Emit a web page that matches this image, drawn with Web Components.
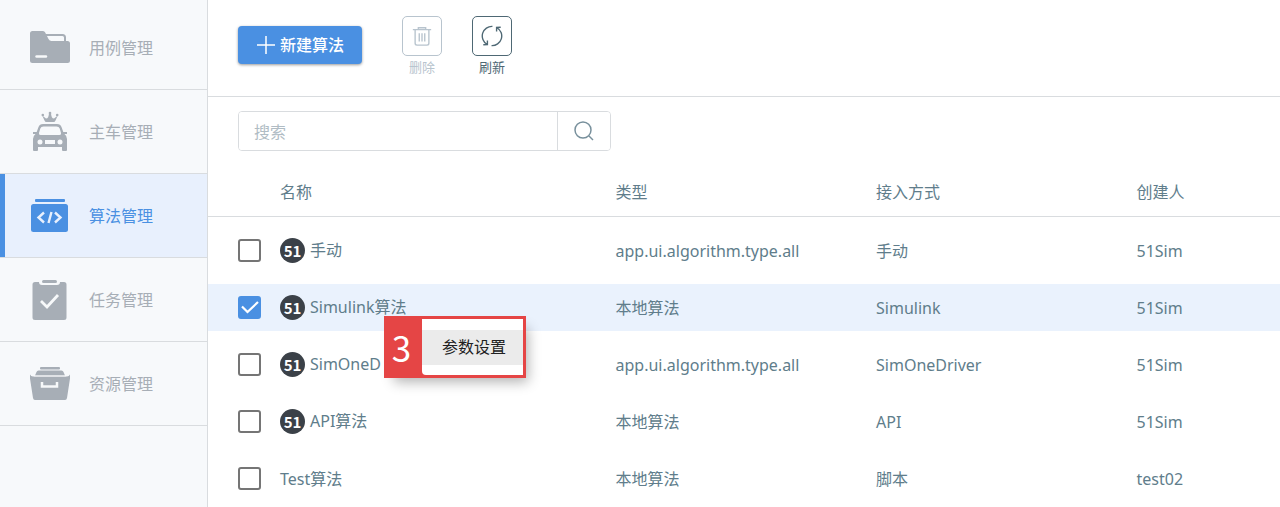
<!DOCTYPE html>
<html lang="zh-CN">
<head>
<meta charset="utf-8">
<meta name="viewport" content="width=device-width, initial-scale=1">
<title>算法管理</title>
<style>
  html, body { margin: 0; min-height: 100%; }
  body {
    font: 16px/24px "Noto Sans", "Noto Sans CJK SC", sans-serif;
    color: #607d8b;
    background: #fff;
    --blue: #4a90e2;
    --line: #d9dcdf;
  }
</style>
</head>
<body>
<algo-app></algo-app>
<script>
const define = (name, html, setup) => {
  const template = document.createElement('template');
  template.innerHTML = html;
  customElements.define(name, class extends HTMLElement {
    connectedCallback() {
      if (this.shadowRoot) return;
      const root = this.attachShadow({ mode: 'open' });
      root.append(template.content.cloneNode(true));
      if (setup) setup(this, root);
    }
  });
};

const navIcons = {
  folder: '<path fill="currentColor" d="M0 2.500Q0 0 2.500 0H13q1.500 0 2.200 1.500L18.500 8q1 2 3 2H37.500q2.500 0 2.500 2.500V29.500q0 2.500-2.500 2.500H2.500Q0 32 0 29.500z" transform="translate(1 4)"/><path fill="none" stroke="currentColor" stroke-width="2" d="M17 8h16.500q2.500 0 2.500 2.500V15"/><path stroke="#f7f9fa" stroke-width="2.400" stroke-linecap="round" d="M7.500 29.500h9.500"/>',
  car: '<g fill="currentColor"><path d="M13.200 4.500L17 7.500Q19.800 7.500 20 2h2Q22.200 7.500 25 7.500L28.800 4.500L26.500 9.500Q26 11 24.500 11H17.500Q16 11 15.500 9.500z"/><circle cx="13.800" cy="4" r="1.300"/><circle cx="21" cy="2" r="1.300"/><circle cx="28.200" cy="4" r="1.300"/><path fill-rule="evenodd" d="M14 13h14q3.500 0 4.500 3l1.800 5H38v2h-2.500q2.500 2 2.500 5v11q0 1-1 1h-3q-1 0-1-1v-3H9v3q0 1-1 1H5q-1 0-1-1V28q0-3 2.500-5H4v-2h3.700l1.800-5q1-3 4.500-3zm.5 2.500q-2.500 0-3.200 2L10 22q-.5 2 1.500 2h19q2 0 1.500-2l-1.300-4.500q-.7-2-3.200-2zM11 28.500a2.500 2.500 0 100 5 2.500 2.500 0 000-5zm5 .5v4h10v-4zm15-.5a2.500 2.500 0 100 5 2.500 2.500 0 000-5z"/></g>',
  code: '<rect x="6" y="4" width="30" height="3" rx="1" fill="currentColor"/><rect x="2" y="9" width="37" height="28" rx="2.500" fill="currentColor"/><path fill="none" stroke="#e8f0fd" stroke-width="2.400" d="M15 17.500l-5.500 5 5.500 5M26 17.500l5.500 5-5.500 5M22.500 17l-3 11"/>',
  task: '<rect x="13" y="1" width="15" height="3" rx="1.500" fill="currentColor"/><path fill="currentColor" d="M6 3h4q0 3 3 3h15q3 0 3-3h4q2.500 0 2.500 2.500v33q0 2.500-2.500 2.500H6q-2.500 0-2.500-2.500v-33Q3.500 3 6 3z"/><path fill="none" stroke="#f7f9fa" stroke-width="2.800" d="M12 22l6 6 11-12"/>',
  box: '<rect x="11" y="4" width="20" height="2.500" rx="1" fill="currentColor"/><path fill="currentColor" d="M9.500 7.500h23q1.500 0 2 1.500l1.500 3.500H6L7.500 9q.5-1.500 2-1.500zM1 11.500q1 2 3 2h34q2 0 3-2v4L38 35q-.3 2-2 2H6q-1.700 0-2-2L1 15.500z"/><path stroke="#f7f9fa" stroke-width=".8" d="M5 13h32"/><path fill="none" stroke="#f7f9fa" stroke-width="2.500" d="M13 19v4.500h15V19"/>'
};

define('nav-item', `
  <style>
    :host { display: block; color: #a7aeb6; }
    a {
      display: flex; align-items: center; gap: 18px; box-sizing: border-box;
      height: 84px; padding-left: 29px; color: inherit; text-decoration: none;
      border-bottom: 1px solid var(--line);
    }
    svg { width: 42px; height: 42px; flex: none; }
    :host([active]) { color: var(--blue); }
    :host([active]) a { background: #e8f0fd; box-shadow: inset 5px 0 var(--blue); }
  </style>
  <a href="#"><svg viewBox="0 0 42 42" aria-hidden="true"></svg><slot></slot></a>
`, (host, root) => {
  root.querySelector('svg').innerHTML = navIcons[host.getAttribute('icon')];
  if (host.hasAttribute('active')) root.querySelector('a').setAttribute('aria-current', 'page');
});

define('side-nav', `
  <style>
    :host { display: block; padding-top: 6px; background: #f7f9fb; border-right: 1px solid var(--line); }
  </style>
  <nav><slot></slot></nav>
`);

define('primary-button', `
  <style>
    :host { display: block; }
    button {
      display: flex; align-items: center; justify-content: center; gap: 4px;
      width: 124px; height: 38px; padding: 0; border: 0; border-radius: 4px;
      background: var(--blue); color: #fff; font: inherit; font-weight: 500;
      box-shadow: 0 1px 3px rgba(0,0,0,.4);
    }
    svg { width: 20px; height: 20px; }
  </style>
  <button type="button"><svg viewBox="0 0 20 20" aria-hidden="true"><path d="M10 1v18M1 10h18" stroke="#fff" stroke-width="1.500"/></svg><slot></slot></button>
`);

const toolIcons = {
  trash: '<path d="M2 5h20M8 5V3h8v2M4.500 5v15q0 2 2 2h11q2 0 2-2V5M9 9v9M12 9v9M15 9v9"/>',
  refresh: '<path d="M12.500 1.500A10.500 10.500 0 0 0 6.500 21M11.500 22.500A10.500 10.500 0 0 0 17.500 3M2.500 21.500l4.500-.2V17M21.500 2.500l-4.500.2V7"/>'
};

define('tool-button', `
  <style>
    :host { display: block; }
    button {
      display: flex; flex-direction: column; align-items: center; gap: 3px;
      padding: 0; border: 0; background: none; color: #4e6874; font: inherit; font-size: 13px; line-height: 16px;
    }
    .frame { display: grid; place-items: center; box-sizing: border-box; width: 40px; height: 40px; border: 1px solid; border-radius: 5px; }
    svg { width: 22px; height: 22px; fill: none; stroke: currentColor; stroke-width: 1.5; }
    button:disabled { color: #b8c4ce; }
  </style>
  <button type="button"><span class="frame"><svg viewBox="0 0 24 24" aria-hidden="true"></svg></span><slot></slot></button>
`, (host, root) => {
  root.querySelector('svg').innerHTML = toolIcons[host.getAttribute('icon')];
  root.querySelector('button').disabled = host.hasAttribute('disabled');
});

define('tool-bar', `
  <style>
    :host { display: flex; align-items: flex-start; gap: 30px; box-sizing: border-box; min-height: 97px; padding: 16px 30px 0; border-bottom: 1px solid var(--line); }
    ::slotted(primary-button) { margin: 10px 10px 0 0; }
  </style>
  <slot></slot>
`);

define('search-box', `
  <style>
    :host { display: block; }
    form { display: flex; box-sizing: border-box; max-width: 373px; height: 40px; border: 1px solid var(--line); border-radius: 4px; overflow: hidden; }
    input { flex: 1; min-width: 0; padding: 2px 15px 0; border: 0; outline: 0; font: inherit; color: inherit; background: #fff; }
    input::placeholder { color: #b0bcc4; opacity: 1; }
    button { display: grid; place-items: center; width: 53px; padding: 0; border: 0; border-left: 1px solid var(--line); background: #fff; color: #78909c; }
    svg { width: 22px; height: 22px; fill: none; stroke: currentColor; stroke-width: 1.5; }
  </style>
  <form role="search">
    <input type="text" placeholder="搜索" aria-label="搜索">
    <button type="button" aria-label="搜索"><svg viewBox="0 0 22 22"><circle cx="10" cy="10" r="8"/><path d="M16 16l4 4"/></svg></button>
  </form>
`);

define('check-box', `
  <style>
    :host { display: grid; width: 23px; height: 23px; }
    input, svg { grid-area: 1 / 1; width: 23px; height: 23px; margin: 0; }
    input { appearance: none; box-sizing: border-box; border: 2px solid #757575; border-radius: 3px; background: #fff; }
    input:checked { border-color: var(--blue); background: var(--blue); }
    svg { display: none; pointer-events: none; }
    input:checked + svg { display: block; z-index: 1; }
  </style>
  <input type="checkbox"><svg viewBox="0 0 23 23" aria-hidden="true"><path d="M4 10.500l5.500 5.500L20 6" fill="none" stroke="#fff" stroke-width="2.200"/></svg>
`, (host, root) => {
  const input = root.querySelector('input');
  input.checked = host.hasAttribute('checked');
  input.setAttribute('aria-label', host.getAttribute('label'));
});

define('vendor-badge', `
  <style>
    :host { display: grid; place-items: center; width: 25px; height: 25px; border-radius: 50%; background: #3b4148; color: #fff; font: 700 15px/25px "Noto Sans CJK SC", sans-serif; }
  </style>
  <span>51</span>
`);

define('algo-table', `
  <style>
    :host { display: block; }
    table { width: 100%; table-layout: fixed; border-collapse: separate; border-spacing: 0 10px; }
    .pick { width: 72px; }
    .name { width: 31.3%; }
    .kind { width: 24.3%; }
    th, td { padding: 0; text-align: left; font-weight: 400; white-space: nowrap; }
    th { height: 49px; border-bottom: 1px solid var(--line); }
    td { height: 47px; }
    td:first-child { padding-left: 30px; }
    .label { display: flex; align-items: center; gap: 5px; }
    .label span { padding-bottom: 2px; }
    tr.selected { background: #eaf2fd; }
  </style>
  <table>
    <colgroup><col class="pick"><col class="name"><col class="kind"><col class="kind"><col></colgroup>
    <thead><tr><th></th><th scope="col">名称</th><th scope="col">类型</th><th scope="col">接入方式</th><th scope="col">创建人</th></tr></thead>
    <tbody></tbody>
  </table>
`, (host, root) => {
  const rows = [
    ['手动', 'app.ui.algorithm.type.all', '手动', '51Sim', true],
    ['Simulink算法', '本地算法', 'Simulink', '51Sim', true, true],
    ['SimOneD', 'app.ui.algorithm.type.all', 'SimOneDriver', '51Sim', true],
    ['API算法', '本地算法', 'API', '51Sim', true],
    ['Test算法', '本地算法', '脚本', 'test02', false]
  ];
  root.querySelector('tbody').innerHTML = rows.map(([name, type, mode, owner, badge, selected]) => `
    <tr class="${selected ? 'selected' : ''}">
      <td><check-box label="${name}" ${selected ? 'checked' : ''}></check-box></td>
      <td>${badge ? `<div class="label"><vendor-badge></vendor-badge><span>${name}</span></div>` : name}</td>
      <td>${type}</td><td>${mode}</td><td>${owner}</td>
    </tr>`).join('');
});

define('context-menu', `
  <style>
    :host { display: flex; box-sizing: border-box; width: 142px; height: 62px; border: 3px solid #e54545; background: #e54545; box-shadow: 6px 8px 12px -4px rgba(0,0,0,.3); }
    .step { display: grid; place-items: center; width: 35px; padding-right: 6px; box-sizing: border-box; color: #fff; font-family: "Noto Sans CJK SC", sans-serif; font-size: 35px; line-height: 56px; }
    .menu { display: flex; align-items: center; flex: 1; background: #fff; border-bottom-left-radius: 4px; }
    button { width: 100%; height: 35px; padding: 0 0 0 3px; border: 0; background: #ebebeb; color: #212121; font: inherit; }
  </style>
  <span class="step"><slot name="step"></slot></span>
  <div class="menu" role="menu"><button type="button" role="menuitem"><slot></slot></button></div>
`);

define('algo-app', `
  <style>
    :host { display: grid; grid-template-columns: 208px minmax(0, 1fr); min-height: 100vh; }
    main { position: relative; min-width: 0; height: 100vh; overflow: hidden; }
    search-box { margin: 14px 30px 6px; }
    context-menu { position: absolute; left: 176px; top: 316px; }
  </style>
  <side-nav>
    <nav-item icon="folder">用例管理</nav-item>
    <nav-item icon="car">主车管理</nav-item>
    <nav-item icon="code" active>算法管理</nav-item>
    <nav-item icon="task">任务管理</nav-item>
    <nav-item icon="box">资源管理</nav-item>
  </side-nav>
  <main>
    <tool-bar>
      <primary-button>新建算法</primary-button>
      <tool-button icon="trash" disabled>删除</tool-button>
      <tool-button icon="refresh">刷新</tool-button>
    </tool-bar>
    <search-box></search-box>
    <algo-table></algo-table>
    <context-menu><span slot="step">3</span>参数设置</context-menu>
  </main>
`);
</script>
</body>
</html>
